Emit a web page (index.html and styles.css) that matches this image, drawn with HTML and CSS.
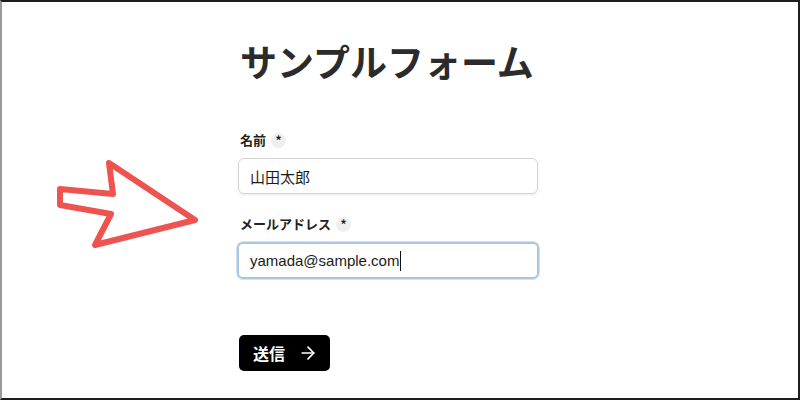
FILE: index.html
```html
<!DOCTYPE html>
<html lang="ja">
<head>
<meta charset="utf-8">
<link rel="stylesheet" href="styles.css">
</head>
<body>
<div class="frame">
  <svg class="arrow" width="800" height="400" viewBox="0 0 800 400">
    <polygon points="109,163 195,220 95,245 111,214 60,205 60,189 113,194" fill="none" stroke="#ef5350" stroke-width="6" stroke-linejoin="round"/>
  </svg>
  <main class="form">
    <h1 class="title">サンプルフォーム</h1>
    <div class="field">
      <label class="label">名前 <span class="req">*</span></label>
      <div class="input">山田太郎</div>
    </div>
    <div class="field">
      <label class="label">メールアドレス <span class="req">*</span></label>
      <div class="input focus">yamada@sample.com<span class="caret"></span></div>
    </div>
    <button class="submit">送信
      <svg class="arr" width="20" height="20" viewBox="0 0 24 24" fill="none" stroke="#fff" stroke-width="2" stroke-linecap="round" stroke-linejoin="round"><path d="M5 12h14"/><path d="m12 5 7 7-7 7"/></svg>
    </button>
  </main>
</div>
</body>
</html>
```

FILE: styles.css
```css
html, body {
  margin: 0;
  padding: 0;
  background: #fff;
}
.frame {
  position: relative;
  width: 800px;
  height: 400px;
  box-sizing: border-box;
  border-top: 2px solid #1e1e1e;
  border-left: 2px solid #9a9a9a;
  border-right: 2px solid #1e1e1e;
  border-bottom: 2px solid #1e1e1e;
  overflow: hidden;
  font-family: "Noto Sans CJK JP", "Noto Sans", sans-serif;
  color: #262626;
}
.arrow {
  position: absolute;
  left: -2px;
  top: -2px;
}
.form {
  display: flex;
  flex-direction: column;
  width: 300px;
  margin-left: 236px;
  padding-top: 34px;
}
.title {
  margin: 0 0 0 2px;
  font-size: 37px;
  line-height: 50px;
  font-weight: 700;
  color: #2b2b2b;
}
.field {
  display: flex;
  flex-direction: column;
}
.label {
  display: flex;
  align-items: center;
  gap: 5px;
  margin: 0 0 8px 2px;
  font-size: 13px;
  font-weight: 700;
  line-height: 20px;
  color: #222;
}
.req {
  display: inline-flex;
  align-items: center;
  justify-content: center;
  width: 15px;
  height: 15px;
  border-radius: 50%;
  background: #efefef;
  font-size: 12px;
  font-weight: 700;
}
.field:first-of-type {
  margin-top: 44px;
}
.input {
  box-sizing: border-box;
  height: 36px;
  border: 1px solid #d4d4d4;
  border-radius: 6px;
  padding: 0 11px;
  display: flex;
  align-items: center;
  font-size: 15px;
  color: #1a1a1a;
  box-shadow: 0 1px 2px rgba(0,0,0,0.08);
}
.field + .field {
  margin-top: 20px;
}
.input.focus {
  height: 37px;
  margin-left: -1px;
  width: 302px;
  border: 2px solid #a8c6de;
  box-shadow: 0 0 0 1px #d4e4f0;
  font-family: "Liberation Sans", "Noto Sans CJK JP", sans-serif;
  padding-left: 11px;
}
.caret {
  display: inline-block;
  width: 1px;
  height: 20px;
  background: #111;
  margin-left: 1px;
}
.submit {
  align-self: flex-start;
  margin: 56px 0 0 1px;
  height: 36px;
  padding: 0 12px 0 14px;
  background: #000;
  color: #fff;
  border: none;
  border-radius: 5px;
  font-family: "Noto Sans CJK JP", sans-serif;
  font-size: 16px;
  font-weight: 700;
  display: flex;
  align-items: center;
  gap: 13px;
}
.arr {
  display: block;
}
```
